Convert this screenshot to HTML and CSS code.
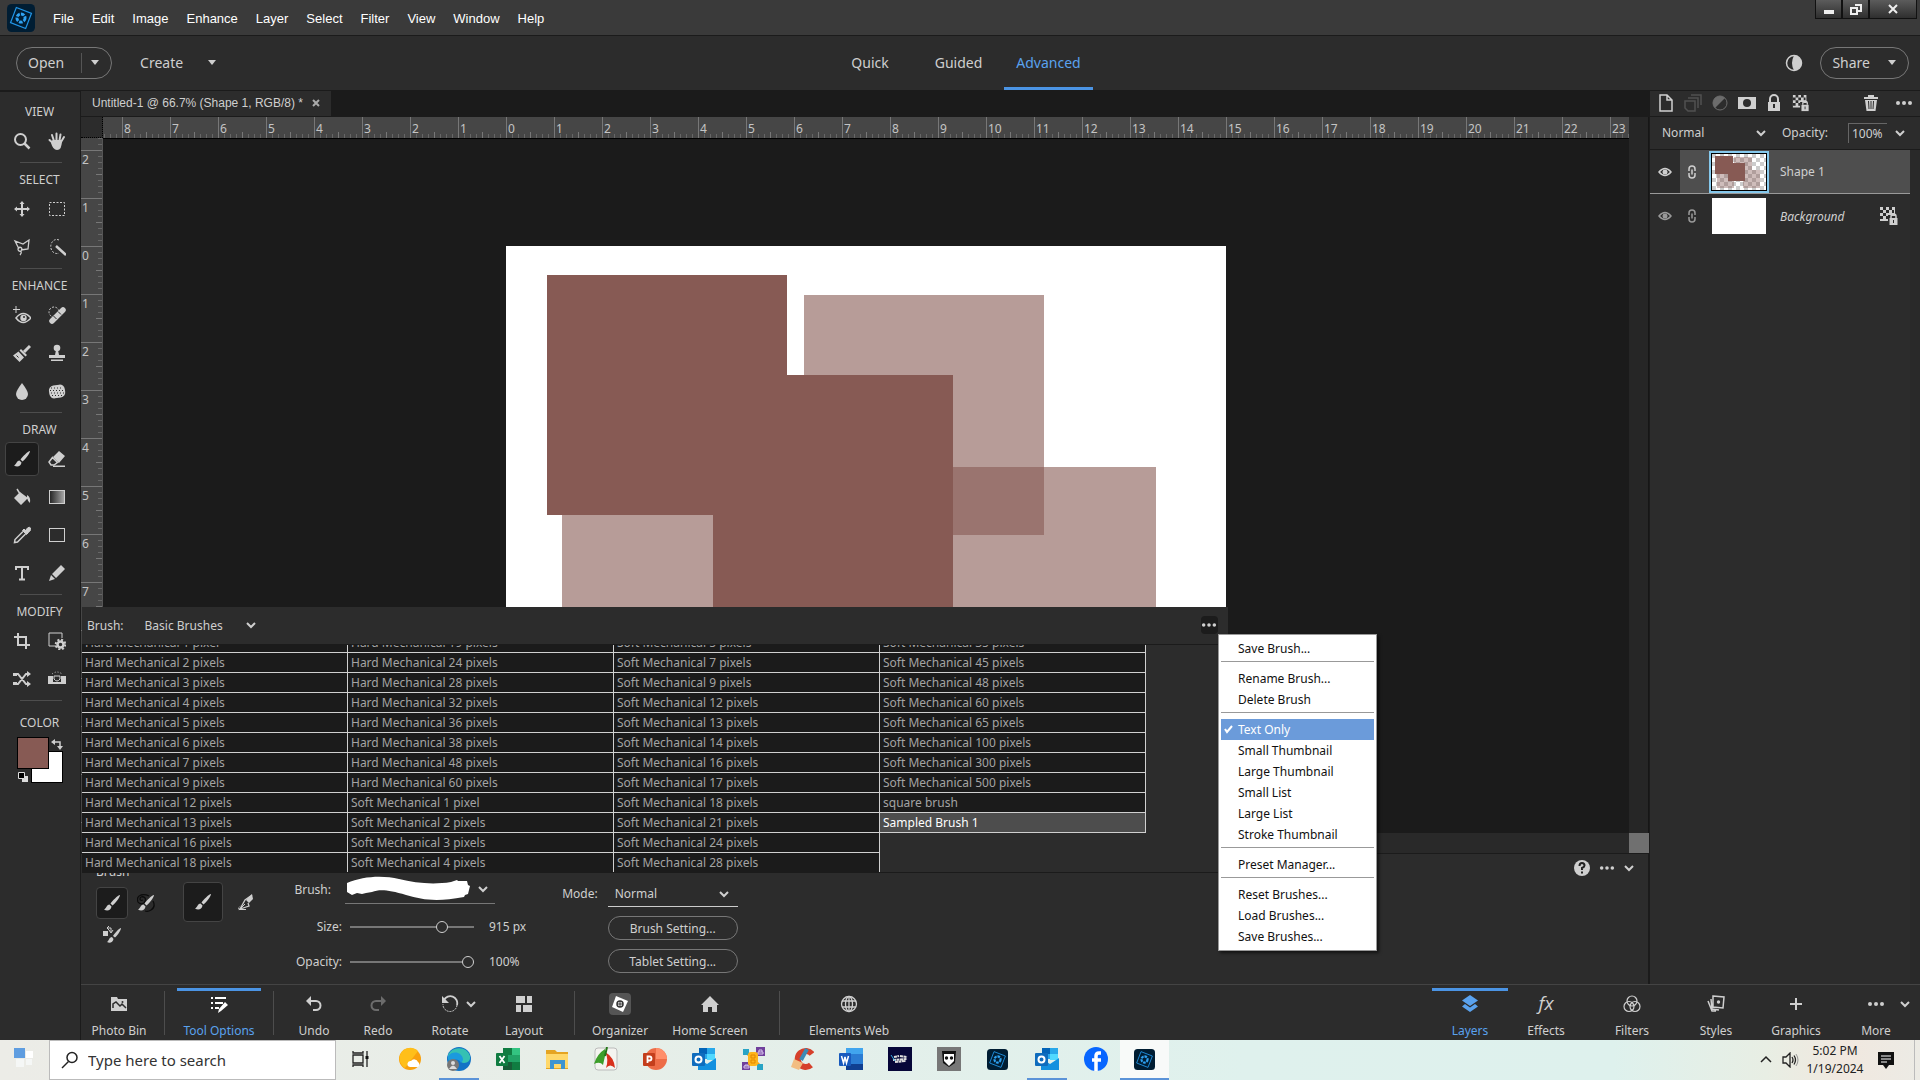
FILE: index.html
```html
<!DOCTYPE html>
<html lang="en">
<head>
  <meta charset="UTF-8">
  <meta name="viewport" content="width=device-width, initial-scale=1.0">
  <title>Photo Editor - Untitled-1</title>
  <link rel="stylesheet" href="styles.css">
</head>
<body>
  <!-- Shared icons -->
  <svg class="sprite" aria-hidden="true">
    <symbol id="chev" viewBox="0 0 12 12"><path d="M2 4l4 4 4-4" fill="none" stroke="currentColor" stroke-width="2"/></symbol>
    <symbol id="caret" viewBox="0 0 10 6"><path d="M1 0h8L5 5z" fill="currentColor"/></symbol>
    <symbol id="dots" viewBox="0 0 18 18"><g fill="currentColor"><circle cx="3" cy="9" r="2"/><circle cx="9" cy="9" r="2"/><circle cx="15" cy="9" r="2"/></g></symbol>
    <symbol id="brush" viewBox="0 0 18 18"><path d="M17 1c-2 .2-8 6-9.500 8.500l2 2C12.500 9 17 3.500 17 1zM6.500 10.500c-3 0-3 4-5.500 5 3 2 7 1 7.500-3z" fill="currentColor"/></symbol>
    <symbol id="lockpix" viewBox="0 0 20 20"><path d="M1 1h15v9h-3v-1H9v6H1z" fill="currentColor"/><path d="M4 1h3v3H4zM10 1h3v3h-3zM1 4h3v3H1zM7 4h3v3H7zM13 4h2v3h-2zM4 7h3v3H4zM1 10h3v3H1zM7 10h2v3H7z" fill="#2c2c2c"/><path d="M12 12v-1.500a2.500 2.500 0 0 1 5 0V12" fill="none" stroke="currentColor" stroke-width="1.500"/><path d="M10.500 12h8v7h-8z" fill="currentColor"/><path d="M14 14h1v3h-1z" fill="#2c2c2c"/></symbol>
    <symbol id="eye" viewBox="0 0 14 10"><path d="M1 5q6-7 12 0-6 7-12 0z" fill="none" stroke="currentColor" stroke-width="1.500"/><circle cx="7" cy="5" r="2.500" fill="currentColor"/></symbol>
    <symbol id="link" viewBox="0 0 10 14"><path d="M2 6V4a3 3 0 0 1 6 0v2M2 8v2a3 3 0 0 0 6 0V8M5 4.500v5" fill="none" stroke="currentColor" stroke-width="1.500"/></symbol>
    <symbol id="element" viewBox="0 0 24 24"><rect width="24" height="24" rx="4" fill="#001d33"/><path d="M8 3l13 5-5 13-13-5z" fill="none" stroke="#2196e8" stroke-width="1"/><circle cx="12" cy="12" r="3.500" fill="none" stroke="#2fa3f3" stroke-width="2.500" stroke-dasharray="3 1"/></symbol>
    <symbol id="outlook" viewBox="0 0 24 24"><path d="M7 1h16v11H7z" fill="#28a8ea"/><path d="M7 1h8v6H7z" fill="#0364b8"/><path d="M15 7h8v6h-8z" fill="#50d9ff"/><path d="M6 11l9 6 9-6v12H6z" fill="#1490df"/><rect y="6" width="13" height="13" rx="1" fill="#0f6cbd"/><circle cx="6.500" cy="12.500" r="3" fill="none" stroke="#fff" stroke-width="2"/></symbol>
  </svg>

  <header class="titlebar">
    <svg class="logo" viewBox="0 0 24 24"><use href="#element"/></svg>
    <nav class="menu">
      <button>File</button><button>Edit</button><button>Image</button><button>Enhance</button><button>Layer</button><button>Select</button><button>Filter</button><button>View</button><button>Window</button><button>Help</button>
    </nav>
    <div class="window-controls">
      <button aria-label="Minimize"><svg width="12" height="12"><path d="M1 7h10v4H1z" fill="#eee"/></svg></button>
      <button aria-label="Restore"><svg width="12" height="12"><path d="M5 2h6v6H8M1 5h6v6H1z" fill="none" stroke="#eee" stroke-width="2"/></svg></button>
      <button class="close" aria-label="Close"><svg width="12" height="12"><path d="M2 2l8 8M10 2l-8 8" stroke="#eee" stroke-width="2"/></svg></button>
    </div>
  </header>

  <div class="topbar">
    <div class="topbar-left">
      <div class="pill"><button>Open</button><span class="bar"></span><button aria-label="Open recent"><svg width="10" height="6"><use href="#caret"/></svg></button></div>
      <button class="create">Create <svg width="10" height="6"><use href="#caret"/></svg></button>
    </div>
    <nav class="modes">
      <button>Quick</button>
      <button>Guided</button>
      <button class="active">Advanced</button>
    </nav>
    <div class="topbar-right">
      <button aria-label="Theme"><svg width="18" height="18"><circle cx="9" cy="9" r="7.500" fill="none" stroke="currentColor" stroke-width="1.500"/><path d="M9 1.500a7.500 7.500 0 0 1 0 15q-4-7.500 0-15z" fill="currentColor"/></svg></button>
      <button class="pill share">Share <svg width="10" height="6"><use href="#caret"/></svg></button>
    </div>
  </div>

  <main class="app">
    <aside class="toolbox">
      <section>
        <h2>VIEW</h2>
        <div class="tools">
          <button aria-label="Zoom"><svg viewBox="0 0 18 18"><circle cx="7.500" cy="7.500" r="5.500" fill="none" stroke="currentColor" stroke-width="2"/><path d="M11.500 11.500l5 5" stroke="currentColor" stroke-width="2.500"/></svg></button>
          <button aria-label="Hand"><svg viewBox="0 0 18 18"><path d="M6 9L4 3M8.500 8V1.500M11.500 8.500l1-6M13 10l3-5M6 12L1.500 8" stroke="currentColor" stroke-width="2" stroke-linecap="round"/><path d="M4.500 8h9.500q0 10-5 10-4 0-6-7z" fill="currentColor"/></svg></button>
        </div>
      </section>
      <section>
        <h2>SELECT</h2>
        <div class="tools">
          <button aria-label="Move"><svg viewBox="0 0 18 18"><path d="M9 2v14M2 9h14" stroke="currentColor" stroke-width="2"/><path d="M6.500 4L9 1l2.500 3zM6.500 14L9 17l2.500-3zM4 6.500L1 9l3 2.500zM14 6.500L17 9l-3 2.500z" fill="currentColor"/></svg></button>
          <button aria-label="Marquee"><svg viewBox="0 0 18 18"><rect x="1.500" y="2.500" width="15" height="13" fill="none" stroke="currentColor" stroke-dasharray="2 1.500"/></svg></button>
          <button aria-label="Lasso"><svg viewBox="0 0 18 18"><path d="M6 11L2 3l8 3 6-4-1 9-7 1M5 11a2 2 0 1 1 3 2c-2 1-3-1-3-2m3 2q1 2-1 4" fill="none" stroke="currentColor" stroke-width="1.300"/></svg></button>
          <button aria-label="Quick selection"><svg viewBox="0 0 18 18"><path d="M11 2a6 7 0 1 0 0 13" fill="none" stroke="currentColor" stroke-dasharray="2 1.500"/><path d="M8 8l10 9" stroke="currentColor" stroke-width="2.500"/></svg></button>
        </div>
      </section>
      <section>
        <h2>ENHANCE</h2>
        <div class="tools">
          <button aria-label="Red eye"><svg viewBox="0 0 18 18"><path d="M3 0v7M0 3.500h7" stroke="currentColor"/><path d="M3 12q7-9 15 0-8 9-15 0z" fill="none" stroke="currentColor" stroke-width="1.500"/><circle cx="10.500" cy="12" r="3.200" fill="currentColor"/><circle cx="11" cy="11" r="1" fill="#2c2c2c"/></svg></button>
          <button aria-label="Spot healing"><svg viewBox="0 0 18 18"><circle cx="6" cy="6" r="5" fill="none" stroke="currentColor" stroke-dasharray="2 1.500"/><path d="M4 15L15 4" stroke="currentColor" stroke-width="5.500" stroke-linecap="round"/><path d="M5.500 10l3 3M10 5.500l3 3" stroke="#2c2c2c"/></svg></button>
          <button aria-label="Smart brush"><svg viewBox="0 0 18 18"><path d="M11 8l6-6" stroke="currentColor" stroke-width="3"/><path d="M8 5l6 6-1.500 1.500-6-6zM5.500 7.500l5.500 6L6.500 18 0 11.500z" fill="currentColor"/><path d="M3.500 11.500l2 2" stroke="#2c2c2c"/></svg></button>
          <button aria-label="Clone stamp"><svg viewBox="0 0 18 18"><circle cx="9" cy="4" r="3.300" fill="currentColor"/><path d="M8 6h2l1 5h6v3H1v-3h6zM3 15.500h12V17H3z" fill="currentColor"/></svg></button>
          <button aria-label="Blur"><svg viewBox="0 0 18 18"><path d="M9 1q6 8 6 11a5.500 5.500 0 0 1-12 0q0-3 6-11z" fill="currentColor"/></svg></button>
          <button aria-label="Sponge"><svg viewBox="0 0 18 18"><rect x="1" y="3" width="16" height="13" rx="5" fill="currentColor" transform="rotate(-8 9 9)"/><g fill="none" stroke="#2c2c2c" stroke-dasharray="1 2"><path d="M3 6h12M2 8.500h14M3 11h13M4 13.500h10"/></g></svg></button>
        </div>
      </section>
      <section>
        <h2>DRAW</h2>
        <div class="tools">
          <button class="selected" aria-label="Brush"><svg><use href="#brush"/></svg></button>
          <button aria-label="Eraser"><svg viewBox="0 0 18 18"><path d="M11 1l6 5-6 7-6-6zM5 15.500h12V17H5z" fill="currentColor"/><path d="M4.500 7.500l5 5L6 15H3l-2-3z" fill="none" stroke="currentColor" stroke-width="1.500"/></svg></button>
          <button aria-label="Paint bucket"><svg viewBox="0 0 18 18"><path d="M7 4l8 6-7 7-7-7zM14 7q4 2 3 8-2-1-3-5z" fill="currentColor"/><path d="M4 1l5 8" stroke="currentColor" stroke-width="1.500"/></svg></button>
          <button aria-label="Gradient"><svg viewBox="0 0 18 18"><defs><linearGradient id="fade"><stop stop-color="#222"/><stop offset="1" stop-color="#aaa"/></linearGradient></defs><rect x="1.500" y="2.500" width="15" height="13" fill="url(#fade)" stroke="currentColor"/></svg></button>
          <button aria-label="Eyedropper"><svg viewBox="0 0 18 18"><path d="M9.500 4.500l1.500-1.500 4 4-1.500 1.500zM12.500 4.500l2-2.500q2-1.500 3 0t-1 3.500L14 7.500z" fill="currentColor" stroke="currentColor"/><path d="M10 5.500l-8 8-.5 3 3-.5 8-8" fill="none" stroke="currentColor" stroke-width="1.500"/></svg></button>
          <button aria-label="Rectangle"><svg viewBox="0 0 18 18"><rect x="1.500" y="2.500" width="15" height="13" fill="none" stroke="currentColor"/></svg></button>
          <button aria-label="Type"><svg viewBox="0 0 18 18"><path d="M3 6V3h12v3M9 3v12M6 15.500h6" fill="none" stroke="currentColor" stroke-width="2"/></svg></button>
          <button aria-label="Pencil"><svg viewBox="0 0 18 18"><path d="M13 1l4 4-9 9-4-4zM3 11l4 4-6 2z" fill="currentColor"/></svg></button>
        </div>
      </section>
      <section>
        <h2>MODIFY</h2>
        <div class="tools">
          <button aria-label="Crop"><svg viewBox="0 0 18 18"><path d="M5 1v12h12M1 5h12v12" fill="none" stroke="currentColor" stroke-width="2"/></svg></button>
          <button aria-label="Recompose"><svg viewBox="0 0 18 18"><path d="M8 14H1V1h13v5" fill="none" stroke="currentColor"/><circle cx="12.500" cy="12.500" r="3" fill="none" stroke="currentColor" stroke-width="2.500"/><circle cx="12.500" cy="12.500" r="4.800" fill="none" stroke="currentColor" stroke-width="2" stroke-dasharray="2 1.770"/></svg></button>
          <button aria-label="Content-aware move"><svg viewBox="0 0 18 18"><path d="M2 4h3l8 10h2M2 14h3l8-10h2" fill="none" stroke="currentColor" stroke-width="2"/><path d="M14 1l4 3-4 3zM14 11l4 3-4 3zM0 3h4v3H0zM0 12h4v3H0z" fill="currentColor"/></svg></button>
          <button aria-label="Straighten"><svg viewBox="0 0 18 18"><path d="M0 6h5v8H0zM13 6h5v8h-5zM4 12h10v2H4z" fill="currentColor"/><path d="M6 6v3q3 4 6 0V6z" fill="none" stroke="currentColor"/><path d="M4 4q5-4 10 0" fill="none" stroke="currentColor" stroke-dasharray="1 2"/></svg></button>
        </div>
      </section>
      <section class="color">
        <h2>COLOR</h2>
        <div class="swatches">
          <button class="swatch foreground" aria-label="Foreground color"></button>
          <button class="swap" aria-label="Swap colors"><svg width="12" height="12"><path d="M3 4h6v6" fill="none" stroke="currentColor" stroke-width="1.500"/><path d="M0 4l4-3v6zM6 8h6l-3 4z" fill="currentColor"/></svg></button>
          <button class="reset" aria-label="Default colors"><svg width="10" height="10"><path d="M4 4h6v6H4z" fill="#ddd"/><path d="M.500.500h6v6h-6z" fill="#000" stroke="#ddd"/></svg></button>
          <button class="swatch background" aria-label="Background color"></button>
        </div>
      </section>
    </aside>

    <div class="work">
      <div class="upper">
        <div class="center">
          <div class="doc-tabs">
            <div class="doc-tab">Untitled-1 @ 66.7% (Shape 1, RGB/8) * <button aria-label="Close document"><svg width="8" height="8"><path d="M1 1l6 6M7 1L1 7" stroke="#aaa" stroke-width="2"/></svg></button></div>
          </div>
          <div class="workspace">
            <div class="ruler-corner"></div>
            <div class="ruler-x" id="ruler-x"></div>
            <div class="ruler-y" id="ruler-y"></div>
            <div class="stage">
              <svg class="artboard" width="720" height="480">
                <rect width="720" height="480" fill="#fff"/>
                <g fill="#875a54">
                  <rect x="298" y="49" width="240" height="240" opacity=".6"/>
                  <rect x="56" y="221" width="240" height="240" opacity=".6"/>
                  <rect x="410" y="221" width="240" height="240" opacity=".6"/>
                  <rect x="41" y="29" width="240" height="240"/>
                  <rect x="207" y="129" width="240" height="240"/>
                </g>
              </svg>
            </div>
            <div class="vscroll"></div>
          </div>
          <div class="hscroll"><span></span></div>

          <div class="options">
            <div class="brush-types">
              <h3>Brush</h3>
              <div class="type-grid">
                <button class="selected" aria-label="Brush tool"><svg><use href="#brush"/></svg></button>
                <button aria-label="Impressionist brush"><svg viewBox="0 0 18 18"><path d="M6 6q-3 1-3-1 0-3 4-2 3 2 0 6-4 2-6-1-2-5 3-7 4-1 8 1M16 7q3 6-2 9-3 2-6 1" fill="none" stroke="#0c0c0c" stroke-width="1.300"/><use href="#brush" width="18" height="18"/></svg></button>
                <button aria-label="Color replacement"><svg viewBox="0 0 18 18"><path d="M0 5h5v5H0z" fill="currentColor"/><path d="M4 2h4v4M6 4l2 3 2-3M6 0L4 2l2 2" fill="none" stroke="currentColor"/><path d="M18 2c-2 .2-6 5-8 8l2 1.500C15 9 18 4 18 2zM9 11c-3 0-3 4-5 5 3 2 6 0 6.500-3z" fill="currentColor"/></svg></button>
              </div>
            </div>
            <div class="brush-modes">
              <button class="selected" aria-label="Brush mode"><svg><use href="#brush"/></svg></button>
              <button aria-label="Airbrush mode"><svg viewBox="0 0 18 18"><path d="M15 2l-7 5-5 9 6-2 3-1-1-3" fill="none" stroke="currentColor" stroke-width="1.300"/><path d="M3 16l5-5" stroke="currentColor"/><path d="M15 1l1 5-4 4-3-3zM4 12q-4 4 0 4h5v1H3q-4-1 1-5z" fill="currentColor"/></svg></button>
            </div>
            <div class="sliders">
              <div class="field stroke-field"><span>Brush:</span>
                <button class="stroke" aria-label="Choose brush"><svg width="126" height="28" viewBox="0 0 126 28"><path d="M2 8C18 1 38 0 54 4s34 6 52 3l6-2 1 1h9l1 4 2 1-2 8-3 1-1 2C92 27 78 25 61 20S35 14 27 17l-6 1-4 1-5-1-5 2-5-3z" fill="#fff"/></svg><svg width="12" height="12"><use href="#chev"/></svg></button>
              </div>
              <div class="field"><label for="size">Size:</label><input id="size" type="range" min="0" max="1000" value="770"><output>915 px</output></div>
              <div class="field"><label for="opacity">Opacity:</label><input id="opacity" type="range" min="0" max="100" value="100"><output>100%</output></div>
            </div>
            <div class="mode">
              <label for="mode">Mode:</label>
              <div class="mode-controls">
                <select id="mode"><option>Normal</option></select>
                <button>Brush Setting...</button>
                <button>Tablet Setting...</button>
              </div>
            </div>
            <div class="options-actions">
              <button aria-label="Help"><svg width="18" height="18"><circle cx="9" cy="9" r="8" fill="currentColor"/><path d="M6.500 7q0-3 2.500-3t2.500 2.500Q11.500 8 9 9v2M9 12.500v2" fill="none" stroke="#222" stroke-width="2"/></svg></button>
              <button aria-label="More options"><svg width="16" height="16"><use href="#dots"/></svg></button>
              <button aria-label="Collapse"><svg width="12" height="12"><use href="#chev"/></svg></button>
            </div>
          </div>

          <!-- Brush picker, opens over the canvas -->
          <div class="picker">
            <div class="picker-head">
              <label for="brush-set">Brush:</label>
              <select id="brush-set"><option>Basic Brushes</option></select>
              <button class="picker-more" aria-label="Brush menu"><svg width="16" height="16"><use href="#dots"/></svg></button>
            </div>
            <div class="brush-list" id="brush-list"></div>
            <div class="popup">
              <button>Save Brush...</button>
              <hr>
              <button>Rename Brush...</button>
              <button>Delete Brush</button>
              <hr>
              <button class="checked"><svg width="9" height="9"><path d="M1 4l2 3 5-6" fill="none" stroke="#fff" stroke-width="2"/></svg>Text Only</button>
              <button>Small Thumbnail</button>
              <button>Large Thumbnail</button>
              <button>Small List</button>
              <button>Large List</button>
              <button>Stroke Thumbnail</button>
              <hr>
              <button>Preset Manager...</button>
              <hr>
              <button>Reset Brushes...</button>
              <button>Load Brushes...</button>
              <button>Save Brushes...</button>
            </div>
          </div>
        </div>

        <aside class="layers">
          <div class="layer-tools">
            <button aria-label="New layer"><svg viewBox="0 0 18 18"><path d="M3 1h7l5 5v11H3zM10 1v5h5" fill="none" stroke="currentColor" stroke-width="1.500"/></svg></button>
            <button class="off" aria-label="New group"><svg viewBox="0 0 18 18"><path d="M1 7h10v10H4l-3-3zM4 4h10v10M7 1h10v10" fill="none" stroke="currentColor" stroke-width="1.500"/></svg></button>
            <button class="dim" aria-label="Adjustment layer"><svg viewBox="0 0 18 18"><circle cx="9" cy="9" r="7" fill="none" stroke="currentColor"/><path d="M14 4a7 7 0 1 0-10 10z" fill="currentColor"/></svg></button>
            <button aria-label="Layer mask"><svg viewBox="0 0 18 18"><path d="M0 3h18v12H0z" fill="currentColor"/><circle cx="9" cy="9" r="4" fill="#2c2c2c"/></svg></button>
            <button aria-label="Lock all"><svg viewBox="0 0 18 18"><path d="M3 8h12v9H3z" fill="currentColor"/><path d="M5 8V5a4 4 0 0 1 8 0v3" fill="none" stroke="currentColor" stroke-width="2"/><path d="M8 10h2v4H8z" fill="#2c2c2c"/></svg></button>
            <button aria-label="Lock transparency"><svg><use href="#lockpix"/></svg></button>
            <button class="trash" aria-label="Delete layer"><svg viewBox="0 0 18 18"><path d="M2 3h14v2H2zM6 1h6v3H6zM3 6h12l-1.500 11h-9z" fill="currentColor"/><path d="M6.500 7l.500 8M9 7v8M11.500 7l-.500 8" stroke="#2c2c2c"/></svg></button>
            <button aria-label="Panel menu"><svg><use href="#dots"/></svg></button>
          </div>
          <div class="blend">
            <select aria-label="Blend mode"><option>Normal</option></select>
            <label for="layer-opacity">Opacity:</label>
            <input id="layer-opacity" type="text" value="100%">
            <button aria-label="Opacity slider"><svg width="12" height="12"><use href="#chev"/></svg></button>
          </div>
          <ul class="layer-list">
            <li class="current">
              <button aria-label="Toggle Shape 1"><svg width="14" height="10"><use href="#eye"/></svg></button>
              <div class="layer">
                <svg width="10" height="14"><use href="#link"/></svg>
                <svg class="thumb" width="54" height="36"><defs><pattern id="checks" width="8" height="8" patternUnits="userSpaceOnUse"><path d="M0 0h8v8H0z" fill="#fff"/><path d="M0 0h4v4H0zM4 4h4v4H4z" fill="#ccc"/></pattern></defs><path d="M0 0h54v36H0z" fill="url(#checks)"/><g fill="#875a54"><path d="M22 3h18v18H22zM31 16h17v18H31zM5 16h17v18H5z" opacity=".4"/><path d="M3 2h18v18H3zM16 9h17v18H16z"/></g></svg>
                <span>Shape 1</span>
              </div>
            </li>
            <li>
              <button aria-label="Toggle Background"><svg width="14" height="10"><use href="#eye"/></svg></button>
              <div class="layer">
                <svg width="10" height="14"><use href="#link"/></svg>
                <svg class="thumb" width="54" height="36"><path d="M0 0h54v36H0z" fill="#fff"/></svg>
                <em>Background</em>
                <svg class="locked" width="20" height="20"><use href="#lockpix"/></svg>
              </div>
            </li>
          </ul>
        </aside>
      </div>

      <footer class="actions">
        <button class="w66"><span class="icon"><svg viewBox="0 0 18 18"><path d="M1 2h6l1 2h9v12H1z" fill="currentColor"/><path d="M3 13V9l3-2 4 4 2-2 4 4" fill="none" stroke="#2c2c2c" stroke-width="1.500"/><circle cx="12.500" cy="7" r="1" fill="#2c2c2c"/></svg></span>Photo Bin</button>
        <span class="sep"></span>
        <button class="w84 active"><span class="icon"><svg viewBox="0 0 18 18"><path d="M1 2h2v2H1zM1 7h2v2H1zM1 12h2v2H1zM5 2h11v2H5zM5 7h8v2H5zM5 12h4v2H5zM15 7l3 3-7 6-3 2 1-4z" fill="#fff"/></svg></span>Tool Options</button>
        <span class="sep"></span>
        <button class="w56"><span class="icon"><svg viewBox="0 0 18 18"><path d="M3 6h8a4.500 4.500 0 0 1 0 9H8" fill="none" stroke="currentColor" stroke-width="2"/><path d="M1 6l5-5v10z" fill="currentColor"/></svg></span>Undo</button>
        <button class="w72"><span class="icon dim"><svg viewBox="0 0 18 18"><path d="M15 6H7a4.500 4.500 0 0 0 0 9h3" fill="none" stroke="currentColor" stroke-width="2"/><path d="M17 6l-5-5v10z" fill="currentColor"/></svg></span>Redo</button>
        <button class="w72"><span class="icon"><svg viewBox="0 0 18 18"><path d="M3 5a7 7 0 0 1 13 5" fill="none" stroke="currentColor" stroke-width="1.800"/><path d="M16 10a7 7 0 0 1-14-1" fill="none" stroke="currentColor" stroke-dasharray="2 1"/><path d="M1 1v7h7z" fill="currentColor"/></svg><svg class="chev"><use href="#chev"/></svg></span>Rotate</button>
        <button class="w76"><span class="icon"><svg viewBox="0 0 18 18"><path d="M1 1h9v7H1zM12 1h5v7h-5zM1 10h5v7H1zM8 10h9v7H8z" fill="currentColor"/></svg></span>Layout</button>
        <span class="sep"></span>
        <button class="w66"><span class="icon"><svg class="big" viewBox="0 0 22 22"><rect width="22" height="22" rx="4" fill="#555"/><path d="M7 3l12 5-5 11-11-5z" fill="#fff"/><circle cx="11" cy="11" r="3" fill="none" stroke="#333" stroke-width="1.500"/><path d="M11 8v6M8 11h6" stroke="#333"/></svg></span>Organizer</button>
        <button class="w114"><span class="icon"><svg viewBox="0 0 18 18"><path d="M9 1l9 9h-2v7h-5v-5H7v5H2v-7H0z" fill="currentColor"/></svg></span>Home Screen</button>
        <span class="sep"></span>
        <button class="w114"><span class="icon"><svg viewBox="0 0 18 18"><g fill="none" stroke="currentColor" stroke-width="1.300"><circle cx="9" cy="9" r="7.500"/><ellipse cx="9" cy="9" rx="3.500" ry="7.500"/><path d="M9 1v16M2 6h14M2 12h14"/></g></svg></span>Elements Web</button>
        <span class="space"></span>
        <button class="w76 active"><span class="icon"><svg viewBox="0 0 18 18"><path d="M9 0l8 5.500L9 11 1 5.500zM4 9l5 3.500L14 9l3 2.500L9 17l-8-5.500z" fill="currentColor"/></svg></span>Layers</button>
        <button class="w76"><span class="icon fx">fx</span>Effects</button>
        <button class="w96"><span class="icon"><svg viewBox="0 0 18 18"><g fill="none" stroke="currentColor" stroke-width="1.200"><circle cx="9" cy="6" r="5"/><circle cx="6" cy="11.500" r="5"/><circle cx="12" cy="11.500" r="5"/></g></svg></span>Filters</button>
        <button class="w72"><span class="icon"><svg viewBox="0 0 18 18"><path d="M6 1l11 1-1 11-10-1zM4 4l1 10 7 1M1 6l4 10h4" fill="none" stroke="currentColor" stroke-width="1.500"/><circle cx="11.500" cy="7" r="1.700" fill="currentColor"/></svg></span>Styles</button>
        <button class="w88"><span class="icon"><svg viewBox="0 0 18 18"><path d="M9 3v12M3 9h12" stroke="currentColor" stroke-width="2"/></svg></span>Graphics</button>
        <button class="w72"><span class="icon"><svg><use href="#dots"/></svg><svg class="chev far"><use href="#chev"/></svg></span>More</button>
      </footer>
    </div>
  </main>

  <div class="taskbar">
    <button class="start" aria-label="Start"><svg width="22" height="22"><path d="M1 1h11v10H1z" fill="#5f9de0"/><path d="M13 4h7v7h-7z" fill="#fff"/><path d="M3 12h8v8H3zM13 12h6v6h-6z" fill="#f5f7f6"/></svg></button>
    <label class="search"><svg width="18" height="18"><circle cx="11" cy="6.500" r="5" fill="none" stroke="#222" stroke-width="1.500"/><path d="M7.500 10.500L1 17" stroke="#222" stroke-width="1.500"/></svg><input type="text" placeholder="Type here to search" aria-label="Search"></label>
    <button aria-label="Task view"><svg class="small" viewBox="0 0 18 18"><path d="M1 5h10v8H1zM1 1v2h10V1M1 17v-2h10v2M15 1v16" fill="none" stroke="#222" stroke-width="1.300"/><path d="M13.500 6h3v3h-3z" fill="#111"/></svg></button>
    <button aria-label="Weather"><svg viewBox="0 0 24 24"><circle cx="12" cy="12" r="11" fill="#f9a10e"/><path d="M3 6a11 11 0 0 1 17-2L7 21A11 11 0 0 1 3 6z" fill="#ffbf1a"/><path d="M12 20a3 3 0 0 1 1-6 4 4 0 0 1 7 1 3 3 0 0 1 0 5z" fill="#fff"/></svg></button>
    <button class="running" aria-label="Edge"><svg viewBox="0 0 24 24"><circle cx="12" cy="12" r="12" fill="#1273c6"/><path d="M1 8A12 12 0 0 1 23 9c1 7-6 8-9 6 2-4 0-8-5-8S1 11 1 15z" fill="#35c1b3"/><path d="M1 9C6 3 15 5 16 12c0 3-2 3-2 4-2-5-9-4-12 0z" fill="#1b9ade"/><circle cx="6" cy="18" r="6" fill="#777"/><circle cx="6" cy="16" r="2" fill="#ddd"/><path d="M2 22q4-7 8 0z" fill="#ddd"/></svg></button>
    <button aria-label="Excel"><svg viewBox="0 0 24 24"><path d="M7 1h17v22H7z" fill="#21a366"/><path d="M7 1h9v7H7zM16 15h8v8h-8z" fill="#107c41"/><path d="M16 1h8v7h-8z" fill="#33c481"/><path d="M7 15h9v8H7z" fill="#185c37"/><rect y="6" width="12" height="13" rx="1" fill="#107c41"/><path d="M3.500 9l5 7M8.500 9l-5 7" stroke="#fff" stroke-width="1.800"/></svg></button>
    <button aria-label="File Explorer"><svg viewBox="0 0 24 24"><path d="M1 3h9l2 2h11v17H1z" fill="#e5a422"/><path d="M1 7h22v14H1z" fill="#ffd86b"/><path d="M5 22v-9h15v9h-4v-5H9v5z" fill="#3e94d1"/></svg></button>
    <button aria-label="Media tool"><svg viewBox="0 0 24 24"><rect x="1" y="1" width="22" height="22" rx="3" fill="#f4f4f0" stroke="#bbb"/><path d="M11 2Q3 7 0 17q6-3 9 1l2-9z" fill="#3d9e2a"/><path d="M11 5q9 5 10 16-5-5-9 0 3-9-1-16z" fill="#d8301c"/><path d="M13 0l-2 9" stroke="#247818" stroke-width="2"/></svg></button>
    <button aria-label="PowerPoint"><svg viewBox="0 0 24 24"><circle cx="13" cy="12" r="11" fill="#ed6c47"/><path d="M13 1a11 11 0 0 1 11 11H13z" fill="#ff8f6b"/><rect y="6" width="12" height="13" rx="1" fill="#c43e1c"/><path d="M4.500 16V9.500h2a2 2 0 0 1 0 4h-2" fill="none" stroke="#fff" stroke-width="1.800"/></svg></button>
    <button aria-label="Outlook"><svg><use href="#outlook"/></svg></button>
    <button aria-label="Password manager"><svg viewBox="0 0 24 24"><path d="M5 5l14 14M19 5L5 19" stroke="#f0a21c" stroke-width="3"/><path d="M2 2h6v6H2zM16 17h6v6h-6z" fill="#29a4c5"/><path d="M15 0h9v9h-9zM1 15h8v8H1z" fill="#70409c"/><path d="M18 5V3h3v2M17 5h5v2h-5zM4 19v-1h3v1M3 19h5v2H3z" fill="none" stroke="#d9c4ee"/><rect x="7" y="5" width="10" height="14" rx="3" fill="#ffb51b"/><path d="M10 8h4v3h-4zM10 13h4v3h-4z" fill="none" stroke="#e38900"/></svg></button>
    <button aria-label="CCleaner"><svg viewBox="0 0 24 24"><path d="M22 7A8 8 0 1 0 21 18" fill="none" stroke="#d6402b" stroke-width="6"/><path d="M17 2l-6 11" stroke="#3a8bb6" stroke-width="4"/><path d="M4 12l9 4-4 7-8-3z" fill="#f2bd82"/></svg></button>
    <button aria-label="Word"><svg viewBox="0 0 24 24"><path d="M7 1h17v22H7z" fill="#2b7cd3"/><path d="M7 1h17v6H7z" fill="#41a5ee"/><path d="M7 17h17v6H7z" fill="#103f91"/><rect y="6" width="12" height="13" rx="1" fill="#185abd"/><path d="M2.500 9l2 7L6 10l1.500 6 2-7" fill="none" stroke="#fff" stroke-width="1.500"/></svg></button>
    <button aria-label="Game"><svg viewBox="0 0 24 24"><path d="M0 0h24v24H0z" fill="#060638"/><path d="M6 10l5-1M12 9l7 1M5 13l14-1M7 15l11-1" stroke="#ddd" stroke-width="2" stroke-dasharray="3 .500"/><path d="M3 8l4 6" stroke="#34a9e0"/></svg></button>
    <button aria-label="Panda"><svg viewBox="0 0 24 24"><path d="M0 0h24v24H0z" fill="#777"/><path d="M5 4h14l-1 12-6 4-6-4z" fill="#111"/><path d="M7 7h10v7l-5 5-5-5z" fill="#fff"/><circle cx="9.500" cy="11" r="1.700" fill="#111"/><circle cx="14.500" cy="11" r="1.700" fill="#111"/></svg></button>
    <button aria-label="Elements Organizer"><svg class="mid"><use href="#element"/></svg></button>
    <button class="running" aria-label="Outlook mail"><svg><use href="#outlook"/></svg></button>
    <button aria-label="Facebook"><svg viewBox="0 0 24 24"><circle cx="12" cy="12" r="12" fill="#0866ff"/><path d="M17 6h-2q-3 0-3 3v15M8 13h9" fill="none" stroke="#fff" stroke-width="3.500"/></svg></button>
    <button class="running front" aria-label="Elements Editor"><svg class="mid"><use href="#element"/></svg></button>
    <div class="tray">
      <button aria-label="Hidden icons"><svg width="12" height="12"><path d="M1 8l5-5 5 5" fill="none" stroke="#222" stroke-width="1.500"/></svg></button>
      <button aria-label="Volume"><svg width="18" height="16"><path d="M1 5h3l4-4v14l-4-4H1zM10 5q2 3 0 6M12 3.500q3 4.500 0 9" fill="none" stroke="#222" stroke-width="1.300"/><path d="M14 2q4 6 0 12" fill="none" stroke="#999"/></svg></button>
      <div class="clock"><span>5:02 PM</span><span>1/19/2024</span></div>
      <button aria-label="Notifications"><svg width="16" height="17"><path d="M0 0h16v13h-5l-3 4-3-4H0z" fill="#111"/><path d="M3 4h10M3 7h10M3 10h6" stroke="#fff"/></svg></button>
    </div>
  </div>
  <script src="script.js"></script>
</body>
</html>
```
FILE: styles.css
```css
* {
  box-sizing: border-box;
}
body {
  margin: 0;
  height: 100vh;
  display: flex;
  flex-direction: column;
  overflow: hidden;
  background-color: #1b1b1b;
  color: #cfcfcf;
  font-family: "Noto Sans", "Open Sans", sans-serif;
  font-size: 12px;
}
button, input, select {
  font: inherit;
  color: inherit;
  background: none;
  border: none;
  padding: 0;
  margin: 0;
}
svg {
  flex-shrink: 0;
  display: block;
}
h2, h3 {
  margin: 0;
  font-size: 12px;
  font-weight: normal;
}
.sprite {
  position: absolute;
  width: 0;
  height: 0;
}
select {
  appearance: none;
  background: url("data:image/svg+xml,%3Csvg xmlns='http://www.w3.org/2000/svg' width='12' height='12'%3E%3Cpath d='M2 4l4 4 4-4' fill='none' stroke='%23cfcfcf' stroke-width='2'/%3E%3C/svg%3E") no-repeat right 8px center;
}
.selected {
  background-color: #1c1c1c;
  border: 1px solid #444;
  border-radius: 4px;
}

/* Title bar */
.titlebar {
  height: 36px;
  display: flex;
  background-color: #3a3a3a;
  border-bottom: 1px solid #1b1b1b;
  flex-shrink: 0;
}
.logo {
  width: 28px;
  height: 28px;
  margin: 4px 18px 0 7px;
}
.menu {
  display: flex;
  gap: 18px;
  padding-top: 1px;
  color: #fff;
  font-family: "Liberation Sans", Arial, sans-serif;
  font-size: 13px;
}
.window-controls {
  margin-left: auto;
  margin-right: 3px;
  display: flex;
  height: 19px;
}
.window-controls button {
  width: 27px;
  display: grid;
  place-items: center;
  border: 1px solid #111;
  border-top: none;
  background: linear-gradient(#5c5c5c, #2f2f2f);
}
.window-controls .close {
  width: 48px;
}

/* Mode bar */
.topbar {
  height: 55px;
  display: grid;
  grid-template-columns: 1fr auto 1fr;
  background-color: #2c2c2c;
  border-bottom: 1px solid #1b1b1b;
  font-size: 14px;
  flex-shrink: 0;
}
.topbar-left, .topbar-right {
  display: flex;
  align-items: center;
  padding: 0 11px 1px 16px;
}
.topbar-right {
  justify-content: flex-end;
  gap: 17px;
}
.pill {
  display: flex;
  align-items: center;
  height: 32px;
  border: 1px solid #777;
  border-radius: 16px;
  padding: 0 11px;
}
.pill .bar {
  width: 1px;
  height: 20px;
  background-color: #555;
  margin: 0 8px 0 17px;
}
.share {
  gap: 17px;
}
.create {
  display: flex;
  align-items: center;
  gap: 24px;
  margin-left: 28px;
}
.modes {
  display: flex;
  gap: 22px;
  margin-left: 12px;
}
.modes button {
  padding: 0 12px 2px;
  border-bottom: 3px solid transparent;
  border-top: 3px solid transparent;
}
.modes .active {
  margin-left: -12px;
  color: #5aa2ee;
  border-bottom-color: #4b94e4;
}

/* Main area */
.app {
  flex: 1;
  display: flex;
  min-height: 0;
}
.toolbox {
  width: 80px;
  margin: 1px 1px 0 0;
  padding-top: 3px;
  background-color: #2c2c2c;
}
.toolbox section {
  padding-top: 7px;
}
.toolbox section::after {
  content: "";
  display: block;
  width: 42px;
  height: 1px;
  margin: 2px 0 0 20px;
  background-color: #4d4d4d;
}
.toolbox h2 {
  line-height: 20px;
  padding-right: 1px;
  text-align: center;
}
.tools {
  display: grid;
  grid-template-columns: 34px 34px;
  grid-auto-rows: 34px;
  gap: 4px 1px;
  padding: 2px 0 2px 5px;
}
.tools button {
  display: grid;
  place-items: center;
}
.tools svg {
  width: 18px;
  height: 18px;
}
.toolbox .color {
  padding-top: 12px;
}
.toolbox .color::after {
  display: none;
}
.swatches {
  position: relative;
  width: 46px;
  height: 46px;
  margin: 4px 0 0 17px;
}
.swatches button {
  position: absolute;
}
.swatch {
  width: 32px;
  height: 32px;
  border: 1px solid #000;
}
.foreground {
  background-color: #875a54;
  left: 0;
  top: 0;
  z-index: 1;
}
.background {
  background-color: #fff;
  right: 0;
  bottom: 0;
}
.swap {
  right: 0;
  top: 1px;
}
.reset {
  left: 1px;
  bottom: 1px;
}
.work {
  flex: 1;
  min-width: 0;
  display: flex;
  flex-direction: column;
}
.upper {
  flex: 1;
  min-height: 0;
  display: flex;
}
.center {
  flex: 1;
  min-width: 0;
  position: relative;
  display: flex;
  flex-direction: column;
}
.doc-tabs {
  height: 26px;
  flex-shrink: 0;
  display: flex;
}
.doc-tab {
  display: flex;
  align-items: center;
  gap: 9px;
  height: 25px;
  padding: 0 11px 1px;
  background-color: #2c2c2c;
  font-family: "Liberation Sans", Arial, sans-serif;
}
.workspace {
  flex: 1;
  min-height: 0;
  display: grid;
  grid-template: 21px 1fr / 22px 1fr 20px;
}
.ruler-corner {
  background-color: #2c2c2c;
  border-right: 1px dotted #000;
  border-bottom: 1px dotted #000;
}
.ruler-x, .ruler-y {
  display: flex;
  overflow: hidden;
  background-color: #464646;
  color: #c4c4c4;
  line-height: 24px;
}
.ruler-x {
  padding-left: 19px;
  background-image:
    repeating-linear-gradient(to right, #777 0 1px, transparent 1px 48px),
    repeating-linear-gradient(to right, #777 0 1px, transparent 1px 24px),
    repeating-linear-gradient(to right, #666 0 1px, transparent 1px 6px);
  background-size: 3000px 21px, 3000px 6px, 3000px 4px;
  background-position: -29px 0, -5px bottom, -5px bottom;
  background-repeat: no-repeat;
}
.ruler-x span {
  width: 48px;
  padding-left: 2px;
  flex-shrink: 0;
}
.ruler-y {
  flex-direction: column;
  padding-top: 12px;
  line-height: 19px;
  border-right: 1px solid #555;
  background-image:
    repeating-linear-gradient(to bottom, #777 0 1px, transparent 1px 48px),
    repeating-linear-gradient(to bottom, #777 0 1px, transparent 1px 24px),
    repeating-linear-gradient(to bottom, #666 0 1px, transparent 1px 6px);
  background-size: 22px 2000px, 6px 2000px, 4px 2000px;
  background-position: 0 -36px, right -12px, right -36px;
  background-repeat: no-repeat;
}
.ruler-y span {
  height: 48px;
  flex-shrink: 0;
  padding-left: 1px;
}
.stage {
  position: relative;
  overflow: hidden;
  border-top: 1px solid #000;
}
.artboard {
  position: absolute;
  left: 403px;
  top: 107px;
}
.vscroll {
  grid-area: 1 / 3 / 3 / 4;
  background-color: #262626;
  border-right: 1px solid #161616;
}
.workspace .stage {
  grid-area: 2 / 2;
}
.workspace .ruler-y {
  grid-area: 2 / 1;
}
.hscroll {
  height: 21px;
  flex-shrink: 0;
  background-color: #292929;
  border-bottom: 1px solid #1b1b1b;
}
.hscroll span {
  display: block;
  width: 20px;
  height: 20px;
  margin-left: auto;
  background-color: #707070;
}

/* Tool options */
.options {
  height: 130px;
  flex-shrink: 0;
  display: flex;
  background-color: #2c2c2c;
  border-right: 1px solid #1b1b1b;
  padding: 0 13px 0 15px;
}
.options h3 {
  line-height: 16px;
  margin: 10px 0 7px;
}
.type-grid {
  display: grid;
  grid-template-columns: 32px 32px;
  grid-auto-rows: 32px;
  width: 87px;
  column-gap: 2px;
}
.options .type-grid button, .options .brush-modes button {
  display: grid;
  place-items: center;
}
.type-grid svg, .brush-modes svg {
  width: 18px;
  height: 18px;
}
.brush-modes {
  display: grid;
  grid-template-columns: 40px 40px;
  grid-auto-rows: 40px;
  column-gap: 3px;
  padding-top: 28px;
}
.sliders {
  display: flex;
  flex-direction: column;
  padding-top: 18px;
  margin-left: 16px;
}
.field {
  display: grid;
  grid-template-columns: 60px 124px auto;
  align-items: center;
  column-gap: 8px;
  height: 35px;
}
.field label {
  text-align: right;
}
.field output {
  padding-left: 7px;
}
.stroke-field {
  grid-template-columns: 49px 150px;
  column-gap: 14px;
  margin-bottom: 2px;
}
.stroke-field > span {
  text-align: right;
}
.stroke {
  display: flex;
  align-items: center;
  gap: 6px;
  border-bottom: 1px solid #777;
}
input[type="range"] {
  appearance: none;
  height: 14px;
  background: linear-gradient(#777, #777) no-repeat center / 100% 2px;
}
input[type="range"]::-webkit-slider-thumb {
  appearance: none;
  width: 12px;
  height: 12px;
  border: 1px solid #d0d0d0;
  border-radius: 50%;
  background-color: #2c2c2c;
}
.mode {
  display: flex;
  gap: 10px;
  margin-left: 36px;
  padding-top: 27px;
}
.mode label {
  line-height: 26px;
}
.mode-controls {
  display: grid;
  grid-template-columns: 130px;
  grid-template-rows: 26px 24px 24px;
  row-gap: 9px;
}
.mode-controls select {
  border-bottom: 1px solid #ccc;
  padding-left: 7px;
}
.mode-controls button {
  border: 1px solid #777;
  border-radius: 12px;
}
.options-actions {
  display: flex;
  gap: 8px;
  margin: 4px 0 0 auto;
  height: 20px;
  align-items: center;
}

/* Brush picker */
.picker {
  position: absolute;
  left: 1px;
  bottom: 111px;
  width: 1146px;
  height: 266px;
  display: flex;
  flex-direction: column;
  background-color: #2c2c2c;
  border-bottom: 1px solid #1b1b1b;
}
.picker-head {
  height: 38px;
  flex-shrink: 0;
  display: flex;
  align-items: center;
  padding: 0 10px 1px 5px;
  border-bottom: 1px solid #1b1b1b;
}
.picker-head select {
  width: 112px;
  margin-left: 21px;
  background-position: right 0 center;
}
.picker-more {
  margin-left: auto;
  width: 17px;
  height: 18px;
  background-color: #1c1c1c;
  border-radius: 4px;
}
.brush-list {
  flex: 1;
  min-height: 0;
  overflow: hidden;
  display: grid;
  grid-template-columns: repeat(4, 266px);
  align-items: start;
}
.brush-list ul {
  list-style: none;
  margin: -12px 0 0;
  padding: 0;
  border-right: 1px solid #d0d0d0;
}
.brush-list li {
  height: 20px;
  background-color: #1b1b1b;
  border-bottom: 1px solid #d0d0d0;
}
.brush-list button {
  display: block;
  width: 100%;
  height: 19px;
  line-height: 20px;
  padding-left: 3px;
  text-align: left;
  color: #a4a4a4;
}
.brush-list .picked button {
  background-color: #4d4d4d;
  color: #fff;
}
.popup {
  position: absolute;
  left: 1136px;
  top: 27px;
  width: 159px;
  padding: 3px 2px;
  background-color: #fff;
  border: 1px solid #999;
  box-shadow: 2px 2px 3px rgba(0, 0, 0, 0.6);
  color: #111;
}
.popup button {
  display: flex;
  align-items: center;
  width: 100%;
  height: 21px;
  padding-left: 17px;
}
.popup .checked {
  background-color: #6b9bda;
  color: #fff;
  padding-left: 3px;
  gap: 5px;
}
.popup hr {
  border: none;
  height: 1px;
  margin: 2px 0 6px;
  background-color: #999;
}

/* Layers panel */
.layers {
  width: 271px;
  border-left: 1px solid #1b1b1b;
  border-right: 10px solid #292929;
  background-color: #2c2c2c;
}
.layer-tools {
  height: 26px;
  display: flex;
  align-items: center;
  gap: 9px;
  padding: 0 0 2px 7px;
  margin-right: -10px;
  background-color: #2c2c2c;
  border-bottom: 1px solid #1b1b1b;
}
.layer-tools svg {
  width: 18px;
  height: 18px;
}
.layer-tools .off {
  color: #505050;
}
.layer-tools .dim, .icon.dim {
  color: #6c6c6c;
}
.layer-tools .trash {
  margin-left: auto;
}
.layer-tools button:last-child {
  margin: 0 7px 0 6px;
}
.blend {
  height: 33px;
  display: flex;
  align-items: center;
  padding: 0 0 1px 12px;
  margin-right: -10px;
  background-color: #2c2c2c;
  border-bottom: 1px solid #1b1b1b;
}
.blend select {
  width: 105px;
  margin-right: 15px;
  background-position: right 0 center;
}
.blend input {
  width: 39px;
  height: 20px;
  margin: 0 7px 0 auto;
  padding-left: 3px;
  border-top: 1px solid #666;
  border-left: 1px solid #666;
}
.blend button {
  margin-right: 14px;
}
.layer-list {
  list-style: none;
  margin: 0;
  padding: 0;
}
.layer-list li {
  display: flex;
  height: 44px;
}
.layer-list li > button {
  width: 30px;
  display: grid;
  place-items: center;
}
.layer {
  flex: 1;
  display: flex;
  align-items: center;
  padding: 0 11px 0 7px;
}
.thumb {
  margin: 0 14px 0 15px;
}
.current {
  border-bottom: 1px solid #999;
}
.current .layer {
  background-color: #4e4e4e;
}
.current .thumb {
  outline: 1px solid #000;
  box-shadow: 0 0 0 3px #85c8ec;
}
.layer-list li:last-child > button, .layer-list li:last-child svg:first-child {
  color: #999;
}
.locked {
  margin-left: auto;
}

/* Action bar */
.actions {
  height: 56px;
  flex-shrink: 0;
  display: flex;
  background-color: #2c2c2c;
  border-top: 1px solid #444;
  padding: 3px 8px 0 5px;
}
.actions button {
  display: flex;
  flex-direction: column;
  align-items: center;
  white-space: nowrap;
  border-top: 3px solid transparent;
  line-height: 18px;
}
.actions .active {
  color: #5aa2ee;
  border-top-color: #4b94e4;
}
.icon {
  width: 100%;
  height: 26px;
  margin-bottom: 5px;
  display: grid;
  grid-template-columns: 1fr auto 1fr;
  align-items: center;
}
.icon > svg:first-child {
  grid-column: 2;
  width: 18px;
  height: 18px;
}
.icon > .big:first-child {
  width: 22px;
  height: 22px;
}
.icon .chev {
  width: 12px;
  height: 12px;
  margin-left: 6px;
}
.icon .far {
  margin-left: 14px;
}
.fx {
  display: block;
  line-height: 24px;
  font-family: "Open Sans", sans-serif;
  font-size: 19px;
  font-style: italic;
}
.sep {
  width: 1px;
  height: 44px;
  margin: 3px 12px 0;
  background-color: #4d4d4d;
}
.space {
  flex: 1;
}
.w56 { width: 56px; }
.w66 { width: 66px; }
.w72 { width: 72px; }
.w76 { width: 76px; }
.w84 { width: 84px; }
.w88 { width: 88px; }
.w96 { width: 96px; }
.w114 { width: 114px; }

/* Taskbar */
.taskbar {
  height: 40px;
  flex-shrink: 0;
  display: flex;
  background: linear-gradient(to right, #ecece7, #e7eee8 30%, #dff1ed 65%, #def1ed 84%, #e8eee4 92%, #f1e8df 96%, #ecebe5);
  color: #222;
}
.taskbar > button {
  width: 49px;
  display: grid;
  place-items: center;
  border-bottom: 2px solid transparent;
}
.taskbar > button > svg {
  width: 24px;
  height: 24px;
}
.taskbar > button > .small {
  width: 18px;
  height: 18px;
}
.taskbar > button > .mid {
  width: 21px;
  height: 21px;
}
.taskbar .running {
  background: linear-gradient(#5b93d8, #5b93d8) no-repeat center bottom / 40px 2px border-box;
}
.taskbar .front {
  background-color: #f8faf9;
  background-size: 49px 2px;
}
.search {
  width: 287px;
  display: flex;
  align-items: center;
  gap: 9px;
  padding-left: 11px;
  background-color: #fff;
  border: 1px solid #bbb;
}
.search input {
  flex: 1;
  min-width: 0;
  outline: none;
  font-size: 15px;
}
.search input::placeholder {
  color: #333;
}
.tray {
  display: flex;
  align-items: center;
  gap: 10px;
  margin: 0 5px 0 auto;
  padding-right: 20px;
  border-right: 1px solid #bbb;
}
.clock {
  width: 60px;
  display: flex;
  flex-direction: column;
  align-items: center;
  line-height: 18px;
  margin: 0 3px 0 -5px;
}
```
FILE: script.js
```js
function brushes(kind, sizes) {
  return sizes.map(n => `${kind} Mechanical ${n} pixel${n === 1 ? '' : 's'}`);
}

const columns = [
  brushes('Hard', [1, 2, 3, 4, 5, 6, 7, 9, 12, 13, 16, 18]),
  [...brushes('Hard', [19, 24, 28, 32, 36, 38, 48, 60]), ...brushes('Soft', [1, 2, 3, 4])],
  brushes('Soft', [5, 7, 9, 12, 13, 14, 16, 17, 18, 21, 24, 28]),
  [...brushes('Soft', [35, 45, 48, 60, 65, 100, 300, 500]), 'square brush', 'Sampled Brush 1']
];

const list = document.getElementById('brush-list');
columns.forEach(names => {
  const ul = document.createElement('ul');
  names.forEach(name => {
    const li = document.createElement('li');
    const button = document.createElement('button');
    button.textContent = name;
    if (name === 'Sampled Brush 1') li.className = 'picked';
    li.appendChild(button);
    ul.appendChild(li);
  });
  list.appendChild(ul);
});

// Ruler labels count away from the canvas origin
function ruler(id, from, to) {
  const el = document.getElementById(id);
  for (let i = from; i <= to; i++) {
    const span = document.createElement('span');
    span.textContent = Math.abs(i);
    el.appendChild(span);
  }
}
ruler('ruler-x', -8, 23);
ruler('ruler-y', -2, 7);
```
